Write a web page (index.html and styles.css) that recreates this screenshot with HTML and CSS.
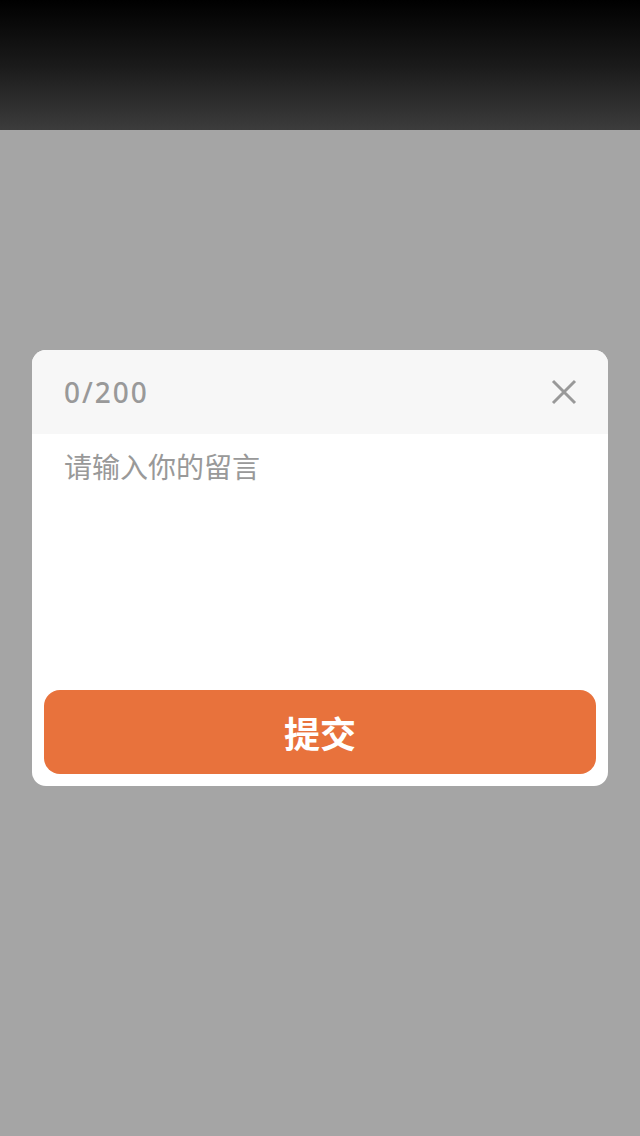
FILE: index.html
```html
<!DOCTYPE html>
<html lang="zh">
<head>
<meta charset="utf-8">
<title>留言</title>
<link rel="stylesheet" href="styles.css">
</head>
<body>
<div class="topbar"></div>
<div class="mask">
  <div class="dialog">
    <div class="dialog-head">
      <span class="count">0/200</span>
      <svg class="close" width="26" height="26" viewBox="0 0 26 26" aria-label="关闭">
        <path d="M2 2 L24 24 M24 2 L2 24" stroke="#999999" stroke-width="3" fill="none"/>
      </svg>
    </div>
    <div class="dialog-body">
      <div class="placeholder">请输入你的留言</div>
    </div>
    <div class="submit">提交</div>
  </div>
</div>
</body>
</html>
```
FILE: styles.css
```css
html, body {
  margin: 0;
  padding: 0;
}
body {
  width: 640px;
  height: 1136px;
  background: #a5a5a5;
  font-family: "Noto Sans CJK SC", "Noto Sans", sans-serif;
  overflow: hidden;
}
.topbar {
  height: 130px;
  background: linear-gradient(to bottom, #000000 0%, #1a1a1a 50%, #3c3c3c 100%);
}
.mask {
  display: flex;
  justify-content: center;
  padding-top: 220px;
}
.dialog {
  width: 576px;
  background: #ffffff;
  border-radius: 14px;
  overflow: hidden;
  display: flex;
  flex-direction: column;
}
.dialog-head {
  height: 84px;
  background: #f7f7f7;
  display: flex;
  align-items: center;
  justify-content: space-between;
  padding: 0 31px 0 32px;
}
.count {
  font-family: "Noto Sans", "Open Sans", sans-serif;
  font-size: 28px;
  font-weight: 500;
  letter-spacing: 2px;
  color: #999999;
  line-height: 1;
}
.close {
  display: block;
}
.dialog-body {
  height: 244px;
  padding: 12px 32px 0;
}
.placeholder {
  font-size: 28px;
  line-height: 40px;
  color: #999999;
}
.submit {
  margin: 0 12px 12px;
  height: 84px;
  border-radius: 16px;
  background: #e8723c;
  color: #ffffff;
  font-size: 36px;
  font-weight: 700;
  display: flex;
  align-items: center;
  justify-content: center;
}
```
